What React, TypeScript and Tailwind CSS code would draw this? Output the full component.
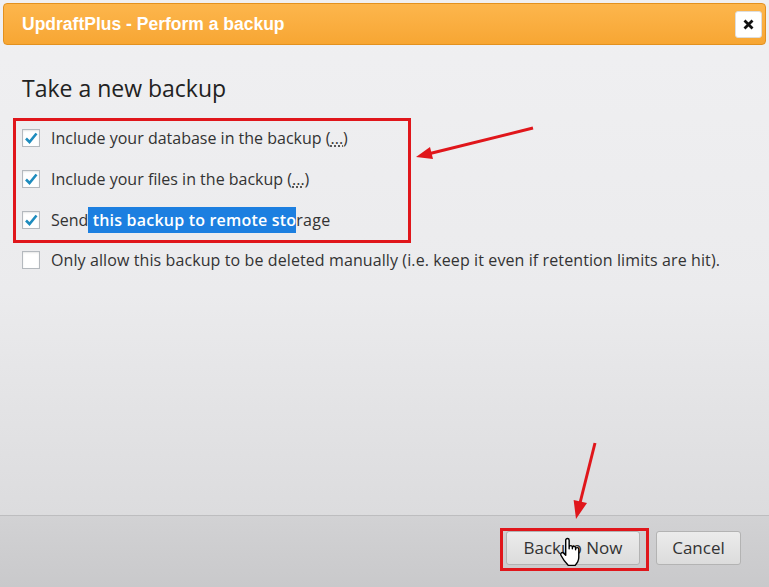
import React from "react";

function Check({ checked }: { checked: boolean }) {
  return (
    <span className="flex h-[18px] w-[18px] shrink-0 items-center justify-center border border-[#b4b9be] bg-white shadow-[inset_0_1px_2px_rgba(0,0,0,0.1)]">
      {checked && (
        <svg width="14" height="14" viewBox="0 0 14 14">
          <path d="M2 7.5 L5.5 11 L12.5 2.5" fill="none" stroke="#1e8cbe" strokeWidth="2.6" />
        </svg>
      )}
    </span>
  );
}

function Row({ checked, children }: { checked: boolean; children: React.ReactNode }) {
  return (
    <label className="flex h-[41px] items-center gap-[11px] pl-[9px] text-[16px] text-[#333]">
      <Check checked={checked} />
      <span className="whitespace-nowrap">{children}</span>
    </label>
  );
}

const More = () => (
  <>
    (<span className="underline decoration-dotted underline-offset-2">...</span>)
  </>
);

export default function App() {
  return (
    <div
      className="relative flex h-[587px] w-[769px] flex-col overflow-hidden bg-gradient-to-b from-[#f0f0f2] via-[#ebebed] to-[#d7d7d9]"
      style={{ fontFamily: '"Open Sans", "Liberation Sans", sans-serif' }}
    >
      {/* title bar */}
      <div className="mx-[3px] mt-[3px] flex h-[42px] items-center justify-between rounded-[4px] border border-[#e3911f] bg-gradient-to-b from-[#fdb64c] to-[#f7a633] pl-[18px] pr-[3px]">
        <span
          className="text-[17.5px] font-bold text-white"
          style={{ fontFamily: '"Liberation Sans", sans-serif' }}
        >
          UpdraftPlus - Perform a backup
        </span>
        <button className="flex h-[27px] w-[27px] items-center justify-center rounded-[3px] border border-[#ddd] bg-white">
          <svg width="11" height="11" viewBox="0 0 11 11">
            <path d="M1.5 1.5 L9.5 9.5 M9.5 1.5 L1.5 9.5" stroke="#111" strokeWidth="2.8" />
          </svg>
        </button>
      </div>

      {/* content */}
      <div className="flex-1 px-[13px] pt-[28px]">
        <h2 className="mb-[15px] pl-[9px] text-[23px] leading-[30px] text-[#222]">Take a new backup</h2>
        <div className="h-[125px] w-[398px] border-[3px] border-[#e0161b]">
          <div className="-ml-[3px] -mt-[4px]">
            <Row checked>
              Include your database in the backup <More />
            </Row>
            <Row checked>
              Include your files in the backup <More />
            </Row>
            <Row checked>
              Send
              <span className="bg-[#1c7fe0] py-[2px] font-semibold tracking-[0.2px] text-white"> this backup to remote sto</span>
              <span className="tracking-[0.3px]">rage</span>
            </Row>
          </div>
        </div>
        <div className="-mt-[4px]">
          <Row checked={false}>
            <span className="tracking-[0.1px]">
              Only allow this backup to be deleted manually (i.e. keep it even if retention limits are hit).
            </span>
          </Row>
        </div>
      </div>

      {/* footer */}
      <div className="flex h-[72px] items-start justify-end gap-[7px] border-t border-[#bdbdbf] bg-gradient-to-b from-[#d2d2d4] to-[#c9c9cb] pr-[28px] pt-[12px]">
        <div className="border-[3px] border-[#e0161b] pb-[3px] pl-[3px] pr-[6px]">
          <button className="relative h-[34px] w-[134px] rounded-[3px] border border-[#b3b3b3] bg-gradient-to-b from-[#ececec] to-[#dcdcdc] text-[17px] text-[#333]">
            Backup Now
            <svg
              className="absolute left-[50px] top-[5px]"
              width="26"
              height="30"
              viewBox="0 0 24 28"
            >
              <path
                d="M8 14 V3 a1.6 1.6 0 0 1 3.2 0 V11 V9.5 a1.5 1.5 0 0 1 3 0 V11 V10.2 a1.5 1.5 0 0 1 3 0 V12 V11.4 a1.5 1.5 0 0 1 3 0 V19 c0 3.5 -1.5 5.5 -3.5 7.5 H10.5 c-2 -2 -5 -5.5 -7 -9.5 c-0.8 -1.6 1 -3.2 2.3 -2 L8 17 Z"
                fill="white"
                stroke="black"
                strokeWidth="1.3"
                strokeLinejoin="round"
              />
            </svg>
          </button>
        </div>
        <button className="mt-[3px] h-[34px] w-[85px] rounded-[3px] border border-[#b3b3b3] bg-gradient-to-b from-[#ececec] to-[#dcdcdc] text-[17px] text-[#333]">
          Cancel
        </button>
      </div>

      {/* annotation arrows */}
      <svg className="pointer-events-none absolute left-0 top-0" width="769" height="587">
        <line x1="533" y1="128" x2="428" y2="154" stroke="#e0161b" strokeWidth="3" />
        <polygon points="416,157 433,159 430,147" fill="#e0161b" />
        <line x1="595" y1="443" x2="580" y2="503" stroke="#e0161b" strokeWidth="3" />
        <polygon points="576,519 587,503 573.6,500" fill="#e0161b" />
      </svg>
    </div>
  );
}
